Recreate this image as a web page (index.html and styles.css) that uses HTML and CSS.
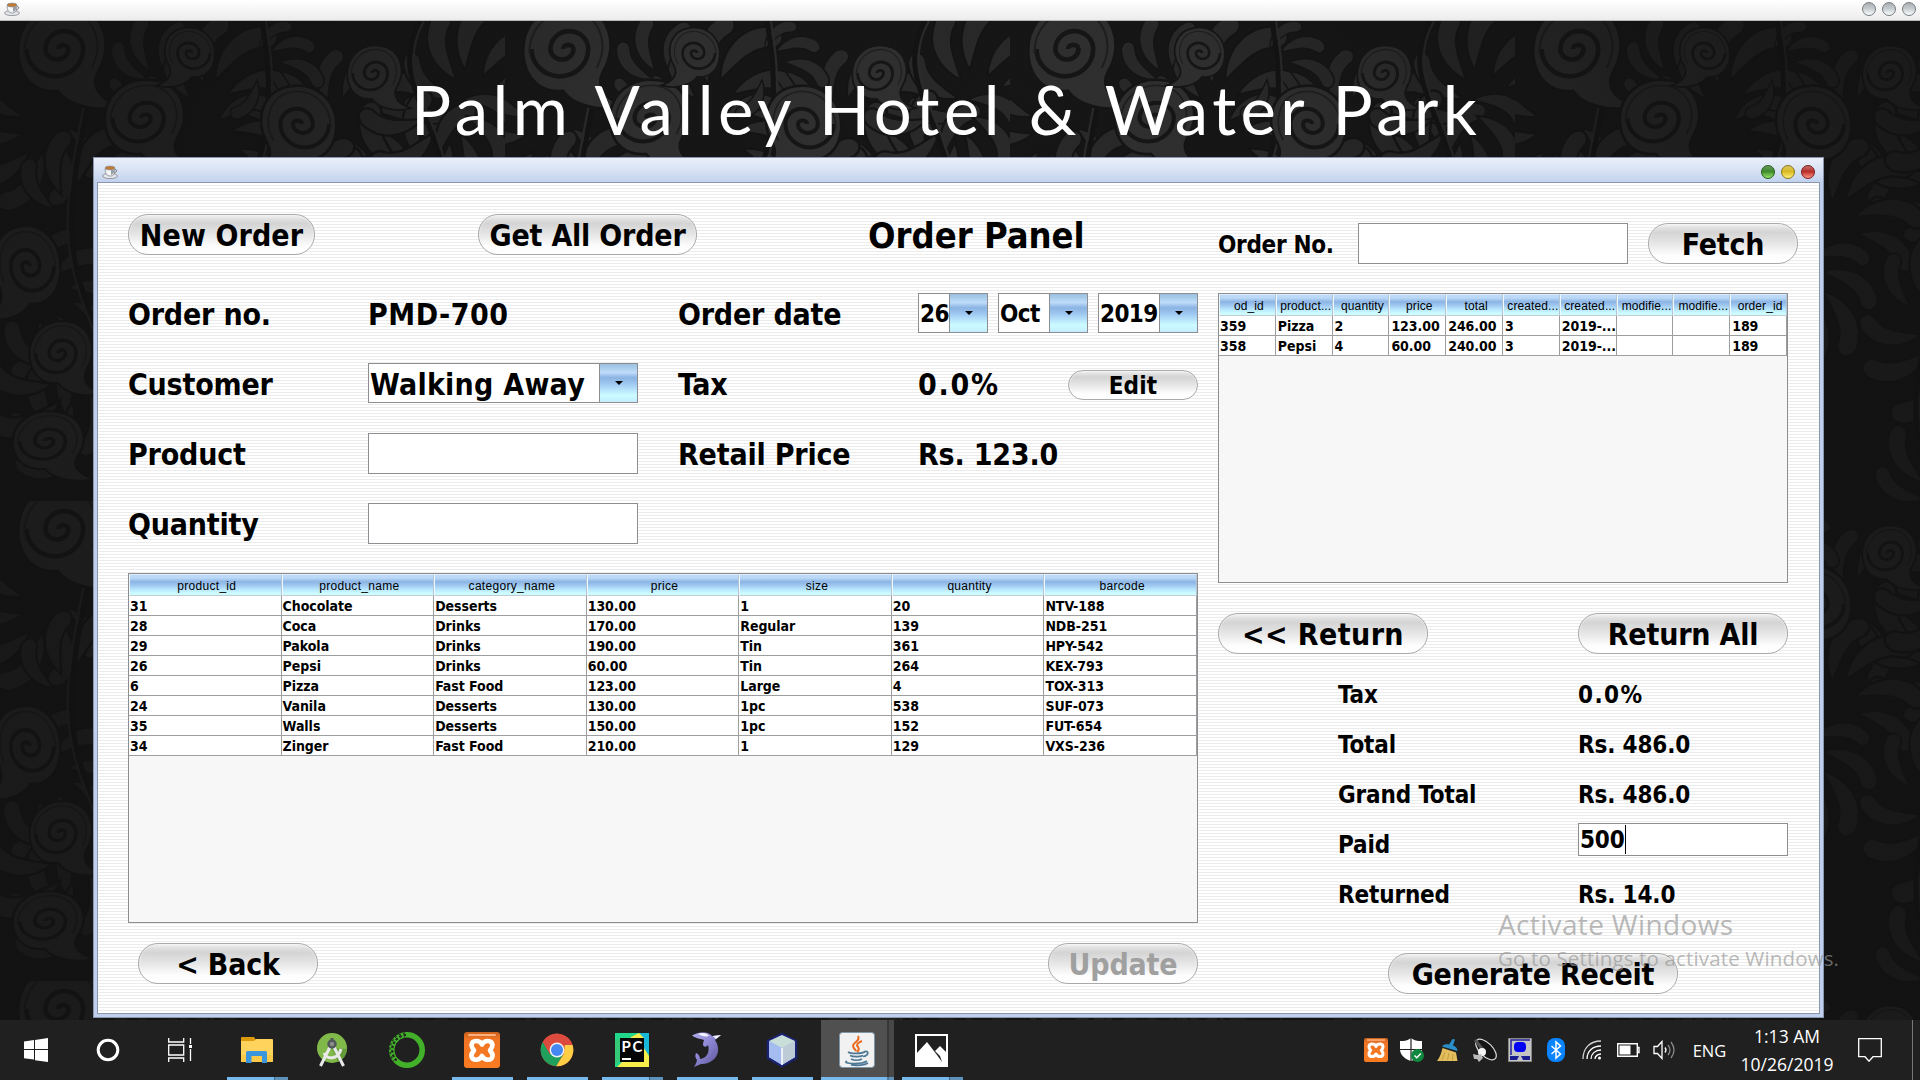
FILE: index.html
```html
<!DOCTYPE html>
<html lang="en">
<head>
<meta charset="utf-8">
<title>Palm Valley Hotel &amp; Water Park</title>
<link rel="stylesheet" href="styles.css">
</head>
<body>
<svg width="0" height="0" class="defs">
  <defs>
    <linearGradient id="xg" x1="0" y1="0" x2="0" y2="1"><stop offset="0" stop-color="#c8601c"/><stop offset=".2" stop-color="#f07424"/><stop offset="1" stop-color="#f97c22"/></linearGradient>
    <symbol id="cup" viewBox="0 0 16 14">
      <ellipse cx="8" cy="11" rx="7.4" ry="2.6" fill="#e4e6ea" stroke="#85888e" stroke-width=".8"/>
      <path d="M3.2 3.2C3 8 4.500 11 8.300 11S13 8 12.800 3.200z" fill="#f4f5f7" stroke="#777b82" stroke-width=".7"/>
      <path d="M9 5v5c2-.5 3.500-2.500 3.600-5z" fill="#9aa0aa"/>
      <path d="M12.800 4.500c2.600-.6 2.700 3-.6 3.200" fill="none" stroke="#777b82"/>
      <ellipse cx="8" cy="3" rx="4.900" ry="1.900" fill="#c07a34" stroke="#8c8c90" stroke-width=".7"/>
    </symbol>
    <symbol id="xampp" viewBox="0 0 36 36">
      <rect width="36" height="36" rx="3" fill="url(#xg)"/><rect x="4" y="2" width="28" height="2" rx="1" fill="#fbb27e"/>
      <path d="M18 12.500C16 8 8 7.500 7.500 13C7.500 15 8.500 16.500 10 18.500C8.500 20 7 22 7.500 24.500C8.500 29 15.500 29 18 24C20.500 29 27.500 29 28.500 24.500C29 22 27.500 20 26 18.500C27.500 16.500 28.500 15 28.500 13C28 7.500 20 8 18 12.500z" fill="none" stroke="#fff" stroke-width="4.600" stroke-linejoin="round"/>
    </symbol>
    <path id="spiral" d="M0 0a5 4 0 0 1 10 0a11 10 0 0 1-22 0a18 17 0 0 1 36 0a27 26 0 0 1-54 0" fill="none"/>
    <path id="leaf" d="M0 0C0-26 16-50 46-50C64-46 58-28 44-30C28-30 16-16 0 0Z"/>
    <g id="plume">
      <use href="#leaf" transform="translate(-26 34) rotate(-100) scale(.8)"/><use href="#leaf" transform="translate(-24 18) rotate(-68) scale(.9)"/><use href="#leaf" transform="translate(-12 4) rotate(-34)"/>
      <use href="#leaf" transform="translate(18 30) rotate(62) scale(.9)"/><use href="#leaf" transform="translate(12 14) rotate(32)"/><use href="#leaf" transform="scale(1.100)"/>
    </g>
    <g id="scroll">
      <path d="M-38 6C-40-28-14-46 12-42C44-38 54-4 38 22C30 38 44 50 60 54C34 62 8 52 0 40C-22 42-36 28-38 6Z" fill="#313131" stroke="#151515" stroke-width="3"/>
      <use href="#spiral" stroke="#161616" stroke-width="4.500"/>
      <path d="M-32 4C-32-22-12-38 10-36C36-32 44-4 32 18" fill="none" stroke="#1f1f1f" stroke-width="2"/>
    </g>
    <pattern id="damask" width="505" height="480" patternUnits="userSpaceOnUse">
      <rect width="505" height="480" fill="#161616"/>
      <g fill="#2a2a2a" stroke="#141414" stroke-width="2.500">
        <use href="#plume" transform="translate(215 60)"/><use href="#plume" transform="translate(370 90) rotate(60)"/><use href="#plume" transform="translate(465 50) rotate(-30)"/>
        <use href="#plume" transform="translate(30 130) rotate(200)"/><use href="#plume" transform="translate(235 140) rotate(120)"/><use href="#plume" transform="translate(90 165) rotate(20)"/>
        <use href="#plume" transform="translate(405 150) rotate(-80)"/><use href="#plume" transform="translate(330 180) rotate(10)"/><use href="#plume" transform="translate(450 120) rotate(160)"/>
        <use href="#plume" transform="translate(70 280) rotate(90)"/><use href="#plume" transform="translate(170 260) rotate(-20)"/><use href="#plume" transform="translate(300 280) rotate(140)"/>
        <use href="#plume" transform="translate(70 400) rotate(-40)"/><use href="#plume" transform="translate(60 380) rotate(200)"/><use href="#plume" transform="translate(435 270) rotate(30)"/>
        <use href="#plume" transform="translate(430 340) rotate(170)"/><use href="#plume" transform="translate(430 440) rotate(-10)"/><use href="#plume" transform="translate(150 50) rotate(-60) scale(.7)"/>
        <use href="#plume" transform="translate(280 50) rotate(100) scale(.7)"/>
      </g>
      <g fill="none" stroke="#131313" stroke-width="5"><path d="M262 0c10 60 12 120-20 180S190 300 225 400s40 60 37 80M98 0C100 70 60 160 75 240s70 120 23 240M420 0c-40 70 50 120 20 220s-60 160-20 260"/></g>
      <g fill="none" stroke="#2c2c2c" stroke-width="2"><path d="M266 0c10 60 12 120-20 180S190 300 225 400s40 60 41 80M94 0C96 70 56 160 71 240s70 120 23 240M424 0c-40 70 50 120 20 220s-60 160-20 260"/></g>
      <use href="#scroll" transform="translate(58 28) scale(1.050)"/><use href="#scroll" transform="translate(141 97) scale(.95 .9)"/><use href="#scroll" transform="translate(302 103) scale(-.9 .9)"/>
      <use href="#scroll" transform="translate(372 52) scale(.65)"/><use href="#scroll" transform="translate(192 32) scale(-.6 .6)"/><use href="#scroll" transform="translate(30 245) scale(-.8 .95)"/><use href="#scroll" transform="translate(58 332) scale(.75)"/>
      <use href="#scroll" transform="translate(45 420) scale(.85 .7)"/><use href="#scroll" transform="translate(438 215) scale(.75 .85)"/><use href="#scroll" transform="translate(450 375) scale(-.8 .9)"/>
    </pattern>
    <radialGradient id="shade" gradientUnits="userSpaceOnUse" cx="930" cy="300" r="1000"><stop offset="0" stop-color="#111" stop-opacity="0"/><stop offset=".4" stop-color="#111" stop-opacity=".1"/><stop offset=".75" stop-color="#111" stop-opacity=".58"/><stop offset="1" stop-color="#111" stop-opacity=".7"/></radialGradient>
  </defs>
</svg>

<header class="topbar">
  <svg class="cup" width="16" height="14"><use href="#cup"/></svg>
  <div class="lights gray"><i></i><i></i><i></i></div>
</header>

<main class="desktop">
  <svg class="wallpaper" width="1920" height="999"><rect width="1920" height="999" fill="url(#damask)"/><rect width="1920" height="999" fill="url(#shade)"/></svg>
  <h1>Palm Valley Hotel &amp; Water Park</h1>

  <section class="window">
    <div class="titlebar">
      <svg class="cup" width="16" height="14"><use href="#cup"/></svg>
      <div class="lights"><i class="green"></i><i class="yellow"></i><i class="red"></i></div>
    </div>
    <div class="panel">
      <div class="left">
        <div class="heading">
          <button class="btn neworder">New Order</button>
          <button class="btn getall">Get All Order</button>
          <h2>Order Panel</h2>
        </div>
        <div class="form">
          <label>Order no.</label><span class="code">PMD-700</span><label>Order date</label>
          <div class="dates">
            <div class="combo day"><b>26</b><i></i></div>
            <div class="combo month"><b>Oct</b><i></i></div>
            <div class="combo year"><b>2019</b><i></i></div>
          </div>
          <label>Customer</label><div class="combo customer"><b>Walking Away</b><i></i></div><label>Tax</label>
          <div class="tax"><span class="percent">0.0%</span><button class="btn edit">Edit</button></div>
          <label>Product</label><div class="input"></div><label>Retail Price</label><span>Rs. 123.0</span>
          <label>Quantity</label><div class="input"></div>
        </div>
        <div class="tablebox products">
          <table>
            <thead><tr><th>product_id</th><th>product_name</th><th>category_name</th><th>price</th><th>size</th><th>quantity</th><th>barcode</th></tr></thead>
            <tbody>
              <tr><td>31</td><td>Chocolate</td><td>Desserts</td><td>130.00</td><td>1</td><td>20</td><td>NTV-188</td></tr>
              <tr><td>28</td><td>Coca</td><td>Drinks</td><td>170.00</td><td>Regular</td><td>139</td><td>NDB-251</td></tr>
              <tr><td>29</td><td>Pakola</td><td>Drinks</td><td>190.00</td><td>Tin</td><td>361</td><td>HPY-542</td></tr>
              <tr><td>26</td><td>Pepsi</td><td>Drinks</td><td>60.00</td><td>Tin</td><td>264</td><td>KEX-793</td></tr>
              <tr><td>6</td><td>Pizza</td><td>Fast Food</td><td>123.00</td><td>Large</td><td>4</td><td>TOX-313</td></tr>
              <tr><td>24</td><td>Vanila</td><td>Desserts</td><td>130.00</td><td>1pc</td><td>538</td><td>SUF-073</td></tr>
              <tr><td>35</td><td>Walls</td><td>Desserts</td><td>150.00</td><td>1pc</td><td>152</td><td>FUT-654</td></tr>
              <tr><td>34</td><td>Zinger</td><td>Fast Food</td><td>210.00</td><td>1</td><td>129</td><td>VXS-236</td></tr>
            </tbody>
          </table>
        </div>
        <div class="actions">
          <button class="btn back">&lt; Back</button>
          <button class="btn update" disabled>Update</button>
        </div>
      </div>

      <div class="right">
        <div class="search"><label>Order No.</label><div class="input"></div><button class="btn fetch">Fetch</button></div>
        <div class="tablebox orders">
          <table>
            <thead><tr><th>od_id</th><th>product...</th><th>quantity</th><th>price</th><th>total</th><th>created...</th><th>created...</th><th>modifie...</th><th>modifie...</th><th>order_id</th></tr></thead>
            <tbody>
              <tr><td>359</td><td>Pizza</td><td>2</td><td>123.00</td><td>246.00</td><td>3</td><td>2019-...</td><td></td><td></td><td>189</td></tr>
              <tr><td>358</td><td>Pepsi</td><td>4</td><td>60.00</td><td>240.00</td><td>3</td><td>2019-...</td><td></td><td></td><td>189</td></tr>
            </tbody>
          </table>
        </div>
        <div class="returns"><button class="btn wide">&lt;&lt; Return</button><button class="btn">Return All</button></div>
        <div class="summary">
          <label>Tax</label><span class="percent">0.0%</span>
          <label>Total</label><span>Rs. 486.0</span>
          <label>Grand Total</label><span>Rs. 486.0</span>
          <label>Paid</label><div class="input paid"><b>500</b><i class="caret"></i></div>
          <label>Returned</label><span>Rs. 14.0</span>
        </div>
        <button class="btn generate">Generate Receit</button>
      </div>
    </div>
  </section>
  <div class="activate"><p class="big">Activate Windows</p><p class="small">Go to Settings to activate Windows.</p></div>
</main>

<footer class="taskbar">
  <div class="sys"><svg width="24" height="24"><path fill="#fff" d="M0 3.500l10-1.400V11H0zM11 2l13-2v11H11zM0 12h10v9.500L0 20.200zM11 12h13v12l-13-1.800z"/></svg></div>
  <div class="sys"><svg width="24" height="24"><circle cx="12" cy="12" r="9.800" fill="none" stroke="#fff" stroke-width="3"/></svg></div>
  <div class="sys"><svg width="24" height="24" fill="none" stroke="#fff" stroke-width="1.300"><path d="M.7 0v4h15V0M.7 24v-4h15v4M.7 7h15v10H.7zM22.500 0v6M22.500 11v12"/><path fill="#fff" stroke="none" d="M21 7h3v3h-3z"/></svg></div>
  <div class="apps">
    <div class="app multi"><svg width="32" height="28" viewBox="0 0 32 28"><path d="M0 2a1 1 0 0 1 1-1h12l2 3v3H0z" fill="#dd9a0c"/><path d="M0 5h13l2-2h16a1 1 0 0 1 1 1v21a1 1 0 0 1-1 1H0z" fill="#ffd35c"/><path d="M0 19h32v7H0z" fill="#f9c440" opacity=".6"/><path d="M5 16.500a1.500 1.500 0 0 1 1.500-1.500h18a1.500 1.500 0 0 1 1.500 1.500V27h-5v-7H10.500v7H5z" fill="#3a96dd"/></svg></div>
    <div class="app"><svg width="32" height="36" viewBox="0 0 32 36"><circle cx="16" cy="16" r="15" fill="#80b94a"/><path d="M16 16L31 17a15 15 0 0 1-9 13z" fill="#649a3a"/><path d="M15 13L4.500 34M17 13l10.500 21M8 21c3 7 14 7 17-4" fill="none" stroke="#e9e9e9" stroke-width="3"/><circle cx="16" cy="12" r="3.500" fill="#8a8f8c" stroke="#51585a" stroke-width="2.500"/><path d="M16 6v4" stroke="#51585a" stroke-width="3"/></svg></div>
    <div class="app"><svg width="36" height="36" viewBox="0 0 36 36" fill="none"><circle cx="18" cy="18" r="15.200" stroke="#43b02a" stroke-width="5.600"/><path d="M17 3A15 15 0 0 0 8 29" stroke="#202020" stroke-width="2.200" stroke-dasharray="2.500 2"/><path d="M16 1A17 17 0 0 0 5 29M16 6A12.500 12.500 0 0 0 9 26" stroke="#202020" stroke-width="1.200" stroke-dasharray="2 2.500"/></svg></div>
    <div class="app run"><svg width="36" height="36"><use href="#xampp"/></svg></div>
    <div class="app run"><svg width="34" height="34" viewBox="0 0 48 48"><circle cx="24" cy="24" r="23" fill="#dd4b3e"/><path d="M4 12.500A23 23 0 0 0 23 47l10.500-18L24 24 14 29z" fill="#1fa15d"/><path d="M46 17a23 23 0 0 1-23 30l11-18 1-12z" fill="#ffce44"/><path d="M4 12.500L14 30l10-13h22A23 23 0 0 0 4 12.500z" fill="#dd4b3e"/><circle cx="24" cy="24" r="10.500" fill="#f1f1f1"/><circle cx="24" cy="24" r="8.500" fill="#4587f3"/></svg></div>
    <div class="app multi"><svg width="34" height="34" viewBox="0 0 34 34"><path fill="#21d789" d="M0 0h34v34H0z"/><path fill="#18b8d8" d="M25 0h9v22l-6-7z"/><path fill="#f8ed4a" d="M16 4l8-4 5 5v10l5 8v11H10l-8 0 6-6z"/><path fill="#35ca78" d="M0 7l9-2v21L0 31z"/><path fill="#050505" d="M5 5h24v24H5z"/><path fill="#fff" d="M7 25h9v2H7z"/><text x="6.500" y="18.500" font-family="Lato,sans-serif" font-weight="700" font-size="15" fill="#fff" textLength="21">PC</text></svg></div>
    <div class="app run"><svg width="32" height="36" viewBox="0 0 32 36"><defs><linearGradient id="dg" x2="1" y2="1"><stop stop-color="#b0aee8"/><stop offset=".4" stop-color="#928bd9"/><stop offset="1" stop-color="#554e91"/></linearGradient></defs><path d="M1 3.500C4 2 8 0 13 .5c4 0 6 1.500 8 3.500l9-1-6 5c6 9 3 18-5 22-4 2-7 2-9 2l-7 3c2-3 3-6 3-7-2-2-2-5-1-7 3 1 4 4 4 6 7-1 10-7 8-14-2 3-5 2-5-1 0-2 1-3 1-4C11 7 6 7 1 3.500z" fill="url(#dg)"/><path d="M7 2c4-2 9-1 11 2-4 1-7 0-11-2zM22 4l8-1-5 4z" fill="#f4f4ff"/></svg></div>
    <div class="app run"><svg width="34" height="36" viewBox="0 0 34 36"><path d="M17 2l14 7v17l-14 8-14-8V9z" fill="#b4c8ee" stroke="#1c2272" stroke-width="2.500"/><path d="M17 3l13 6-13 7L4 9z" fill="#c8ded8"/><path d="M4 9l13 7v17L4 25z" fill="#a5bcf0"/><path d="M30 9l-13 7v17l13-8z" fill="#bccbd6"/><path d="M17 16v17" stroke="#fff" stroke-width="1.500"/></svg></div>
    <div class="app active multi"><svg width="36" height="36" viewBox="0 0 36 36"><rect x=".5" y=".5" width="35" height="35" rx="3" fill="#f1f1f1" stroke="#7d97a8"/><path d="M19 4c3 5-5 6-5 10 0 2 2 3 3 5M23 9c-5 2-6 4-4 6 2 2 0 4-1 5" fill="none" stroke="#ea6a20" stroke-width="2"/><path d="M9 20c3 2 14 2 17-.5 4-1 4 4-2 5M11 23.500c3 1.500 10 1.500 13 0M12 27c3 1.500 8 1.500 11 0M8 29c-6 3 14 4 20 0M12 33c6 1 14 0 17-2" fill="none" stroke="#4e7896" stroke-width="1.700"/></svg></div>
    <div class="app multi"><svg width="33" height="33" viewBox="0 0 33 33"><path d="M1 1h31v31H1z" fill="none" stroke="#fff" stroke-width="2"/><path fill="#fff" d="M1 20L12 8l10 13 5 7-2-6-5-5 5-5 8 8v12H1z"/></svg></div>
  </div>
  <div class="tray">
    <div><svg width="24" height="24"><use href="#xampp"/></svg></div>
    <div><svg width="24" height="24" viewBox="0 0 24 24"><path fill="#fff" d="M11 0c3 2.500 6 3 11 3v8c0 6-5 10-11 12C5 21 0 17 0 11V3c5 0 8-.5 11-3z"/><path stroke="#202020" stroke-width="1.200" d="M11 0v23M0 11.500h22"/><circle cx="17.500" cy="17.500" r="6.500" fill="#10893e"/><path d="M14.500 17.500l2.300 2.300 4-4.300" fill="none" stroke="#fff" stroke-width="1.400"/></svg></div>
    <div><svg width="22" height="24" viewBox="0 0 22 24"><path d="M5.500 10L19 14.500 20.500 23H0c3-4 4.500-8.500 5.500-13z" fill="#e4bd5c"/><path d="M8 14l-3 8M12 15l-1.500 7M16 16l-.5 6" stroke="#c39c48"/><path d="M5 8.500c2-2.500 4-2.500 7-2L15.500 1l2.500.500L16 7.500c2.500 1 4.500 2.500 4.500 5.500z" fill="#2a8fc8"/></svg></div>
    <div><svg width="25" height="25" viewBox="0 0 25 25"><ellipse cx="14" cy="11.500" rx="6.500" ry="13" transform="rotate(-45 14 11.500)" fill="#151515" stroke="#ddd" stroke-width="1.200"/><path d="M3 2l9 11" stroke="#555" stroke-width="3"/><circle cx="10" cy="14" r="4" fill="#f4f4f4"/><path d="M1 16l4 1 4-1 2 4-4 4-2-3-3 0z" fill="#bbb"/></svg></div>
    <div><svg width="24" height="24" viewBox="0 0 24 24"><path fill="#c4c4c4" stroke="#888" d="M.5.500h23v23H.5z"/><path d="M3 17V2h19" fill="none" stroke="#222299" stroke-width="1.500"/><rect x="6" y="4" width="12" height="10" rx="4" fill="#0000f4"/><path fill="#1d1d92" d="M2 18h9l-2 4H2zM13 18h9v4h-7z"/></svg></div>
    <div><svg width="18" height="24" viewBox="0 0 18 24"><rect width="18" height="24" rx="8" fill="#0a84ff"/><path d="M4.500 8l9 8L9 20V4l4.500 4-9 8" fill="none" stroke="#fff" stroke-width="1.500"/></svg></div>
    <div><svg width="20" height="20" viewBox="0 0 20 20" fill="none" stroke="#fff" stroke-width="1.300"><path d="M1 19C1 8 8 1 19 1" opacity=".8"/><path d="M5 19C5 11 11 6 19 6M9 19c0-5 4-9 10-9M13 19c0-3 3-5 6-5"/><circle cx="17.500" cy="18" r="1.500" fill="#fff" stroke="none"/></svg></div>
    <div><svg width="23" height="14" viewBox="0 0 23 14"><path d="M.7.700h19.600v12.600H.7zM20 4.500h2v5h-2" fill="none" stroke="#fff" stroke-width="1.400"/><path fill="#fff" d="M2.500 2.500h11v9h-11z"/></svg></div>
    <div><svg width="23" height="20" viewBox="0 0 23 20" fill="none" stroke="#fff" stroke-width="1.300"><path d="M1 6.500h3.500L9 1.500v17l-4.500-5H1z"/><path d="M12 7.500q2 2.500 0 5"/><path d="M15 5q4 5 0 10M18 2q6 8 0 16" stroke="#888"/></svg></div>
    <div class="lang">ENG</div>
    <div class="clock"><span class="time">1:13 AM</span><span>10/26/2019</span></div>
    <div class="note"><svg width="24" height="24" fill="none" stroke="#fff" stroke-width="1.300"><path d="M.7.700h22.600v18H15l-4 4.500-4-4.500H.7z"/></svg></div>
    <div class="peek"></div>
  </div>
</footer>
</body>
</html>
```
FILE: styles.css
```css
* { box-sizing: border-box; }
body { margin: 0; width: 1920px; height: 1080px; overflow: hidden; display: flex; flex-direction: column; background: #111; font-family: "DejaVu Sans Condensed", "DejaVu Sans", sans-serif; font-stretch: condensed; color: #000; }
svg { display: block; }
h1, h2, p { margin: 0; }
.defs { position: absolute; }

.topbar { height: 21px; flex: none; display: flex; justify-content: space-between; align-items: center; padding: 0 4px 2px; background: linear-gradient(#fff, #ececec); border-bottom: 1px solid #b5b8b5; }
.lights { display: flex; gap: 6px; }
.lights i { width: 14px; height: 14px; border-radius: 50%; border: 1px solid #777c80; background: linear-gradient(#a8aeb2, #c4cacd 45%, #f6feff); }
.lights .green { border-color: #245c18; background: linear-gradient(#6a9a5c, #3c8a2a 45%, #98e468); }
.lights .yellow { border-color: #8a7618; background: linear-gradient(#d8c868, #d8b820 45%, #fff078); }
.lights .red { border-color: #7c1a18; background: linear-gradient(#c07070, #b82c28 45%, #ff9484); }

.desktop { flex: 1; position: relative; display: flex; flex-direction: column; }
.wallpaper { position: absolute; inset: 0; z-index: 0; }
h1 { position: relative; height: 136px; padding: 44px 0 0 411px; font: 400 67px/88px Lato, sans-serif; letter-spacing: 4.500px; word-spacing: 3px; color: #fff; white-space: nowrap; }

.window { position: relative; width: 1731px; height: 861px; margin-left: 93px; border: 1px solid #8a97ae; background: #c0d0ec; padding: 0 3px 3px; display: flex; flex-direction: column; }
.titlebar { height: 24px; margin: 0 -3px; padding: 4px 8px 0 8px; flex: none; display: flex; justify-content: space-between; align-items: center; background: linear-gradient(#ebeffa, #dae4f4 45%, #c2d2ee); }
.panel { flex: 1; border: 1px solid #8a97ae; padding: 30px 0 0 30px; display: flex; gap: 20px; background: repeating-linear-gradient(#fff 0 2px, #ececec 2px 3px); }
.left { width: 1070px; }
.right { width: 580px; padding-top: 10px; }

.btn { height: 41px; padding: 2px 0 0; border: 1px solid #aaa; border-radius: 20px; background: linear-gradient(#f2f2f2 0, #dedede 12%, #d4d4d4 22%, #e6e6e6 50%, #fdfdfd 80%, #fff); box-shadow: inset 0 0 2px #fff; font: bold 30px/1 "DejaVu Sans Condensed", "DejaVu Sans", sans-serif; font-stretch: condensed; letter-spacing: -.2px; color: #000; white-space: nowrap; }
.btn:disabled { color: #a0a0a0; }
.heading { display: grid; grid-template-columns: 350px 390px 1fr; height: 41px; align-items: center; }
.heading h2 { font-size: 36px; line-height: 41px; letter-spacing: 0; padding-top: 2px; }
.btn.neworder { width: 187px; letter-spacing: .1px; }
.getall { width: 219px; }

.form { display: grid; grid-template-columns: 240px 310px 240px 280px; grid-auto-rows: 70px; align-items: center; margin-top: 24px; font-size: 30px; font-weight: bold; letter-spacing: -.2px; }
.form > label, .form > span, .tax span { padding-top: 2px; white-space: nowrap; }
.form .code { letter-spacing: .5px; }
.form .percent { letter-spacing: 1.700px; }
.input { width: 270px; height: 41px; border: 1px solid #8c8e92; background: #fff; }
.dates { display: flex; gap: 10px; font-size: 24px; letter-spacing: -.6px; }
.combo { height: 40px; border: 1px solid #8c8e92; background: #fff; display: flex; align-items: center; justify-content: space-between; }
.combo b { padding: 2px 0 0 1px; white-space: nowrap; }
.combo i { flex: none; width: 38px; height: 38px; border-left: 1px solid #8c8e92; display: flex; align-items: center; justify-content: center; background: linear-gradient(#9cc0e0 0, #a8cdea 10%, #c0dcfa 22%, #8cb4e2 36%, #9cc4ee 50%, #b8e4fc 68%, #ccfcff 82%, #c4ecff); }
.combo i::after { content: ""; border: 4px solid transparent; border-top-color: #000; border-bottom: 0; }
.day { width: 70px; }
.month { width: 90px; }
.year { width: 100px; }
.customer { width: 270px; letter-spacing: .25px; }
.tax { display: flex; justify-content: space-between; align-items: center; }
.btn.edit { width: 130px; height: 30px; border-radius: 15px; font-size: 24px; margin-top: 4px; letter-spacing: .2px; }

.tablebox { border: 1px solid #8c8e92; background: #f7f7f7; }
.products { height: 350px; margin-top: 15px; }
.orders { width: 570px; height: 290px; margin-top: 29px; }
table { width: 100%; table-layout: fixed; border-collapse: separate; border-spacing: 0; }
th { height: 22px; padding: 2px 0 0 3px; font: 400 12px/18px "Liberation Sans", Arial, sans-serif; letter-spacing: .3px; overflow: hidden; white-space: nowrap; border: solid; border-width: 1px; border-color: #dcecfa #b4c4d0 #c4ccd2 #eef8ff; background: linear-gradient(#bcdaf8, #bcdaf8 14%, #8cb4e4 34%, #a0c8f0 52%, #b8e6fe 72%, #cdfcff 92%); }
.orders th { padding-left: 1px; text-indent: 2px; letter-spacing: .1px; }
td { height: 20px; padding: 1px 0 0 1px; font-size: 14px; line-height: 18px; font-weight: bold; letter-spacing: -.05px; background: #fff; border: solid #9c9ea0; border-width: 0 1px 1px 0; white-space: nowrap; overflow: hidden; }
.orders td { padding-left: 2px; }
.orders td:first-child { padding-left: 1px; }
.actions { display: flex; justify-content: space-between; margin-top: 20px; padding-left: 10px; }
.back { width: 180px; }
.update { width: 150px; }

.search { display: flex; align-items: center; }
.search label { width: 140px; font-size: 24px; font-weight: bold; letter-spacing: -.3px; padding-top: 2px; }
.fetch { width: 150px; margin-left: 20px; }
.returns { display: flex; justify-content: space-between; width: 570px; margin-top: 30px; }
.returns .btn { width: 210px; }
.returns .wide { letter-spacing: .4px; }
.summary { display: grid; grid-template-columns: 240px 210px; grid-auto-rows: 50px; align-items: center; padding-left: 120px; margin: 15px 0 34px; font-size: 24px; font-weight: bold; letter-spacing: -.15px; }
.summary > label, .summary > span { padding-top: 2px; }
.summary .percent { letter-spacing: 1.400px; }
.paid { width: 210px; height: 33px; align-self: start; margin-top: 4px; display: flex; align-items: center; padding-left: 1px; }
.paid b { padding-top: 1px; }
.caret { width: 1px; height: 29px; background: #000; }
.generate { width: 290px; margin-left: 170px; }

.activate { position: absolute; left: 1498px; top: 884px; color: rgba(150, 150, 150, .68); font-family: "Open Sans", sans-serif; font-stretch: normal; white-space: nowrap; }
.big { font-size: 28px; line-height: 38px; letter-spacing: .35px; }
.small { font-size: 20.500px; line-height: 30px; letter-spacing: .15px; }

.taskbar { height: 60px; flex: none; display: flex; background: #202020; color: #fff; font-family: "Open Sans", sans-serif; font-stretch: normal; }
.sys { width: 72px; display: grid; place-items: center; }
.apps { display: flex; padding-left: 3px; }
.app { position: relative; width: 75px; display: grid; place-items: center; }
.app.run::after, .app.multi::after { content: ""; position: absolute; left: 8px; bottom: 0; width: 61px; height: 3px; background: #76b9ed; }
.app.multi::after { background: linear-gradient(90deg, #76b9ed 47px, #42637e 47px 48px, #5e92ba 48px); }
.app.active { background: linear-gradient(90deg, transparent 2px, #505050 2px 68px, #383838 68px 70px, #484848 70px); }
.app.active::after { left: 2px; width: 73px; background: linear-gradient(90deg, #76b9ed 66px, #4f7896 66px 68px, #5e92ba 68px); }
.tray { margin-left: auto; display: flex; }
.tray > div { width: 36px; display: grid; place-items: center; }
.tray .lang { width: 55px; font-size: 16.500px; }
.tray .clock { width: 100px; font-size: 17.500px; line-height: 28px; align-content: center; }
.tray .note { width: 66px; }
.tray .peek { width: 17px; border-left: 1px solid #777; margin-left: 9px; margin-right: -9px; }
```
